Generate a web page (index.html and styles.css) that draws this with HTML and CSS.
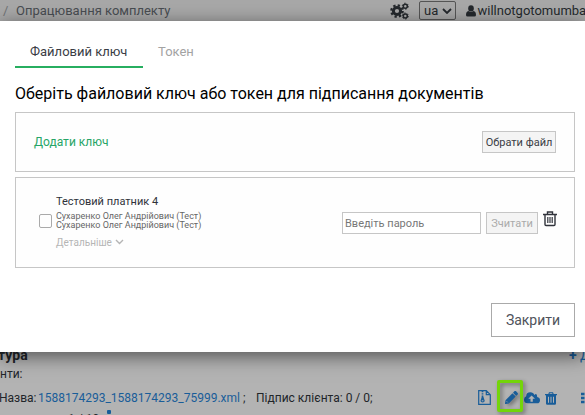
FILE: index.html
```
<!DOCTYPE html>
<html lang="uk">
<head>
<meta charset="utf-8">
<title>Опрацювання комплекту</title>
<link rel="stylesheet" href="styles.css">
</head>
<body>
<header class="topbar">
  <span class="slash">/</span>
  <span class="crumb">Опрацювання комплекту</span>
  <svg class="gears" viewBox="0 0 19 18">
    <circle cx="7" cy="9" r="3.6" fill="none" stroke="currentColor" stroke-width="3"/>
    <circle cx="7" cy="9" r="5.7" fill="none" stroke="currentColor" stroke-width="2.2" stroke-dasharray="2.3 2.177"/>
    <circle cx="15.3" cy="4.2" r="2" fill="none" stroke="currentColor" stroke-width="1.5"/>
    <circle cx="15.3" cy="4.2" r="3" fill="none" stroke="currentColor" stroke-width="1" stroke-dasharray="1.5 1.64"/>
    <circle cx="15.3" cy="14" r="2" fill="none" stroke="currentColor" stroke-width="1.5"/>
    <circle cx="15.3" cy="14" r="3" fill="none" stroke="currentColor" stroke-width="1" stroke-dasharray="1.5 1.64"/>
  </svg>
  <div class="lang">ua<svg viewBox="0 0 10 6"><path d="M1 1l4 4 4-4" fill="none" stroke="currentColor" stroke-width="1.8"/></svg></div>
  <svg class="user" viewBox="0 0 10 12"><ellipse cx="5" cy="3.4" rx="2.8" ry="3.2"/><path d="M2.4 6Q5 8 7.6 6Q10 6.6 10 10Q10 11.6 8.4 11.6H1.6Q0 11.6 0 10Q0 6.6 2.4 6Z"/></svg>
  <span class="name">willnotgotomumba</span>
</header>

<main class="modal">
  <nav class="tabs">
    <span class="tab active">Файловий ключ</span>
    <span class="tab">Токен</span>
  </nav>
  <h1>Оберіть файловий ключ або токен для підписання документів</h1>
  <section class="card add">
    <span class="add-link">Додати ключ</span>
    <button class="small">Обрати файл</button>
  </section>
  <section class="card key">
    <span class="check"></span>
    <div class="info">
      <div class="title">Тестовий платник 4</div>
      <div class="owner">Сухаренко Олег Андрійович (Тест)</div>
      <div class="owner">Сухаренко Олег Андрійович (Тест)</div>
      <div class="more">Детальніше<svg viewBox="0 0 9 6"><path d="M1 1l3.5 3.5L8 1" fill="none" stroke="currentColor" stroke-width="1.4"/></svg></div>
    </div>
    <input class="password" type="text" placeholder="Введіть пароль">
    <button class="small read">Зчитати</button>
    <svg class="bin" viewBox="0 0 14 16"><path d="M0 3.5h14M4.5 3V1h5v2M2 3.5v10q0 1 1 1h8q1 0 1-1v-10" fill="none" stroke="currentColor" stroke-width="1.4"/><path d="M4.8 6v6M7 6v6M9.2 6v6" stroke="currentColor" stroke-width="1.2"/></svg>
  </section>
  <button class="close">Закрити</button>
</main>

<section class="page">
  <div class="heading"><b>тура</b><span class="plus"><b>+</b> Д</span></div>
  <div class="docs">нти:</div>
  <div class="file">
    <span class="label">Назва:</span>
    <span class="link">1588174293_1588174293_75999.xml</span>
    <span class="semi">;</span>
    <span class="sign">Підпис клієнта: 0 / 0;</span>
    <div class="actions">
      <svg class="zip" viewBox="0 0 13 15"><path d="M.7.7h7.6l4 4v9.6H.7zM8.3.7v4h4" fill="none" stroke="currentColor" stroke-width="1.2"/><path d="M4.5 1v6" stroke="currentColor" stroke-width="1.7" stroke-dasharray="1 .7"/><path d="M3.7 7h1.8l1.2 3.7q0 1.8-2.1 1.8t-2.1-1.8z" fill="currentColor"/><path d="M3.8 10.8h1.6" stroke="#b3b3b3"/></svg>
      <span class="mark"><svg class="pencil" viewBox="0 0 512 512"><path fill="currentColor" d="M497.9 142.1l-46.1 46.1c-4.7 4.7-12.3 4.7-17 0l-111-111c-4.7-4.7-4.7-12.3 0-17l46.1-46.1c18.7-18.7 49.1-18.7 67.9 0l60.1 60.1c18.8 18.7 18.8 49.1 0 67.9zM284.2 99.8L21.6 362.4.4 483.9c-2.9 16.4 11.4 30.6 27.8 27.8l121.5-21.3 262.6-262.6c4.7-4.7 4.7-12.3 0-17l-111-111c-4.8-4.7-12.4-4.7-17.1 0z"/><path d="M60 400l50 50" stroke="#b3b3b3" stroke-width="26"/></svg></span>
      <svg class="cloud" viewBox="0 0 16 12"><path fill="currentColor" d="M4 11.3Q0 11.3 0 7.7Q0 5.3 2.2 4.3Q2.2.3 6.3.3Q9.5.3 10.3 3Q13 0 13.2 5.1Q16 5.7 16 8.2Q16 11.3 13 11.3Z"/><path fill="#b3b3b3" d="M7.6 3.4L4.3 6.8h2.2v3h2.3v-3h2.2z"/></svg>
      <svg class="trash" viewBox="0 0 12 13"><path fill="currentColor" fill-rule="evenodd" d="M0 2h3.3L4 .3h4L8.7 2H12v1.2H11V11.5q0 1.3-1.2 1.3H2.2Q1 12.8 1 11.5V3.2H0zM4.5 2h3L7.2 1.2H4.8zM3 4.7v6h1v-6zM5.5 4.7v6h1v-6zM8 4.7v6h1v-6z"/></svg>
      <svg class="list" viewBox="0 0 10 12"><path d="M0 2h3.5M0 6h3.5M0 10h3.5M4.5 2H10M4.5 6H10M4.5 10H10" stroke="currentColor" stroke-width="2.6"/></svg>
    </div>
  </div>
  <div class="next"><span class="count">1 / 10</span><span class="dot"></span></div>
</section>
</body>
</html>
```
FILE: styles.css
```
* { box-sizing: border-box; }
body {
  margin: 0;
  width: 585px;
  height: 415px;
  overflow: hidden;
  font-family: Roboto, "Liberation Sans", sans-serif;
  color: #212529;
  background: #b3b3b3;
  display: grid;
  grid-template-columns: 585px;
  grid-template-rows: 21px 331px 63px;
}
svg { display: block; flex: none; }
button { font-family: inherit; padding: 0; border-radius: 0; }

.topbar {
  display: flex;
  align-items: center;
  height: 21px;
  overflow: hidden;
  white-space: nowrap;
  font-size: 13px;
  color: #24282c;
  background: #a8a8a8;
}
.topbar > * { flex: none; }
.slash { width: 13px; padding-left: 3px; margin-right: 3px; color: #6f7275; }
.crumb { width: 374px; color: #484d52; }
.gears { width: 19px; height: 18px; margin-right: 10px; }
.lang {
  display: flex;
  align-items: center;
  justify-content: space-between;
  width: 37px;
  height: 19px;
  padding: 0 3px 0 4px;
  margin-right: 10px;
  border: 1px solid #555;
  border-radius: 2px;
}
.lang svg { width: 10px; height: 6px; }
.user { width: 10px; height: 12px; margin-right: 1.5px; fill: currentColor; }

.modal {
  position: relative;
  z-index: 1;
  background: #fff;
  box-shadow: 0 4px 18px rgba(0, 0, 0, .55);
  padding: 15px 10px 0 15px;
  display: flex;
  flex-direction: column;
}
.tabs { display: flex; height: 32px; font-size: 13px; color: #a3a3a3; }
.tab { height: 32px; line-height: 31px; padding: 0 15px; }
.tab.active { width: 128px; color: #3a3d45; border-bottom: 2px solid #27ae60; }
h1 { margin: 16px 0 0; font-size: 16px; line-height: 20px; height: 28px; font-weight: 400; color: #000; white-space: nowrap; }
.card { display: flex; border: 1px solid #c6c6c6; background: #fefefe; }
.add { height: 60px; align-items: center; justify-content: space-between; padding: 0 18px; }
.add-link { font-size: 12px; color: #27a567; }
.small { width: 74px; height: 22px; font-size: 11px; color: #3a3d45; background: #f4f4f4; border: 1px solid #c6c6c6; }
.key { height: 91px; margin-top: 5px; padding-left: 22px; }
.check { width: 13px; height: 14px; margin: 36px 4px 0 1px; border: 1px solid #aaa; border-radius: 2px; }
.info { width: 286px; padding-top: 16px; white-space: nowrap; }
.title { font-size: 11px; line-height: 15px; height: 18px; color: #2f323a; }
.owner { font-size: 9px; line-height: 9px; color: #666; }
.more { display: flex; align-items: center; margin-top: 6px; font-size: 10px; letter-spacing: .02px; line-height: 13px; color: #b5b5b5; }
.more { font-size: 10px; }
.more svg { width: 9px; height: 6px; margin: -1px 0 0 3px; }
.password { width: 139px; height: 22px; margin-top: 34px; padding: 0 2px; border: 1px solid #c6c6c6; font: 11px Roboto, sans-serif; background: #fff; }
.password::placeholder { color: #777; }
.read { width: 52px; margin: 34px 4.5px 0 5px; color: #aaa; }
.bin { width: 14px; height: 16px; margin-top: 33px; color: #30333b; }
.close { align-self: flex-end; width: 84px; height: 34px; margin-top: 35px; border: 1px solid #aaa; background: #fff; color: #50535b; font-size: 14px; }

.page { overflow: hidden; font-size: 13px; white-space: nowrap; }
.heading { display: flex; justify-content: space-between; height: 14px; line-height: 14px; margin: -4px 0 0 -2px; font-size: 14px; }
.plus { width: 16px; color: #195d99; }
.docs { height: 19px; margin-top: 1px; line-height: 22px; font-size: 12px; }
.file { display: flex; align-items: center; height: 20px; margin-top: 6px; margin-left: -1px; font-size: 12px; }
.file > * { flex: none; }
.label { width: 39px; }
.link { width: 205px; color: #195d99; }
.semi { width: 13px; }
.sign { width: 222px; }
.actions { display: flex; align-items: center; color: #195d99; height: 20px; }
.zip { width: 13px; height: 15px; margin-top: -1px; }
.mark {
  display: flex;
  align-items: center;
  justify-content: center;
  width: 26px;
  height: 32px;
  margin: -4px 1px 0 6px;
  flex: none;
  border: 3px solid #74d50a;
  border-radius: 2px;
  filter: drop-shadow(2px 2px 2px rgba(0, 0, 0, .4));
}
.pencil { width: 13px; height: 13px; margin: 3px 0 0 3px; }
.cloud { width: 16px; height: 12px; margin-right: 5px; }
.trash { width: 12px; height: 13px; margin-right: 24px; }
.list { width: 10px; height: 12px; }
.next { display: flex; height: 10px; margin-top: 2px; padding-left: 68px; font-size: 12px; }
.count { width: 39px; line-height: 18px; }
.dot { width: 4px; height: 4px; background: #195d99; border-radius: 1px; }
```
